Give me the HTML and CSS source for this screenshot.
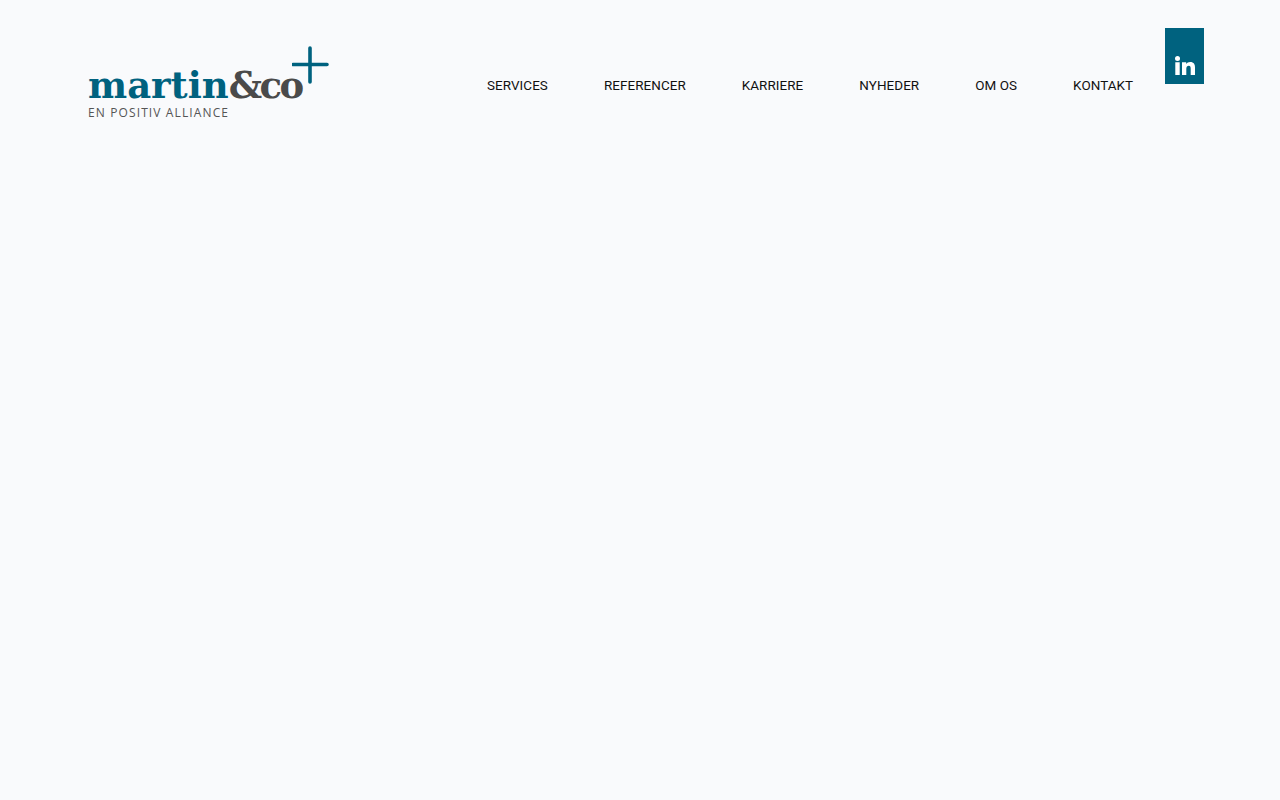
FILE: index.html
```html
<!DOCTYPE html>
<html lang="da">
<head>
<meta charset="utf-8">
<title>Martin &amp; Co</title>
<link rel="stylesheet" href="styles.css">
</head>
<body>
<header class="header">
  <a class="logo" href="#">
    <span class="wordmark"><span class="teal">martin</span><span class="grey">&amp;co</span></span>
    <span class="tagline">EN POSITIV ALLIANCE</span>
    <svg class="plus" width="38" height="38" viewBox="0 0 38 38"><path d="M18 2V36M1 18.500H35" fill="none" stroke="#00627f" stroke-width="3.600" stroke-linecap="round"/></svg>
  </a>
  <nav class="nav">
    <a href="#">SERVICES</a>
    <a href="#">REFERENCER</a>
    <a href="#">KARRIERE</a>
    <a href="#">NYHEDER</a>
    <a href="#">OM OS</a>
    <a href="#">KONTAKT</a>
  </nav>
  <a class="social" href="#" aria-label="LinkedIn">
    <svg width="20" height="19" viewBox="0 0 20 19"><circle cx="2.500" cy="2.500" r="2.500" fill="#fff"/><path fill="#fff" d="M.3 6.300h4.400V19H.3zM7 6.300h4.200v1.700c.7-1.200 2.200-2 4-2 3.700 0 4.800 2.300 4.800 5.600V19h-4.300v-6.300c0-1.700-.4-2.900-1.900-2.900s-2.500 1.200-2.500 2.900V19H7z"/></svg>
  </a>
</header>
</body>
</html>
```
FILE: styles.css
```css
* { box-sizing: border-box; }
html, body { margin: 0; height: 100%; }
body { background: #f9fafc; font-family: "Liberation Sans", Arial, sans-serif; }
a { text-decoration: none; color: inherit; }
.header { display: flex; align-items: flex-start; padding: 28px 76px 0 88px; }
.logo { position: relative; display: flex; flex-direction: column; width: 240px; padding-top: 38px; }
.wordmark { font-family: "DejaVu Serif", serif; font-weight: 700; font-size: 37px; line-height: 38px; white-space: nowrap; }
.teal { color: #00627f; }
.grey { color: #4a4a4a; letter-spacing: -2.500px; }
.tagline { font-family: "Open Sans", sans-serif; font-size: 12px; line-height: 14px; letter-spacing: 1.120px; color: #555; margin-top: 2px; white-space: nowrap; }
.plus { position: absolute; left: 204px; top: 18px; }
.nav { display: flex; gap: 56px; margin-left: 159px; padding-top: 50px; font-family: Roboto, sans-serif; font-size: 13.450px; letter-spacing: .07px; line-height: 16px; color: #111; white-space: nowrap; }
.social { display: flex; align-items: flex-end; justify-content: center; width: 39px; height: 56px; margin-left: auto; padding-bottom: 9px; background: #00627f; }
```
